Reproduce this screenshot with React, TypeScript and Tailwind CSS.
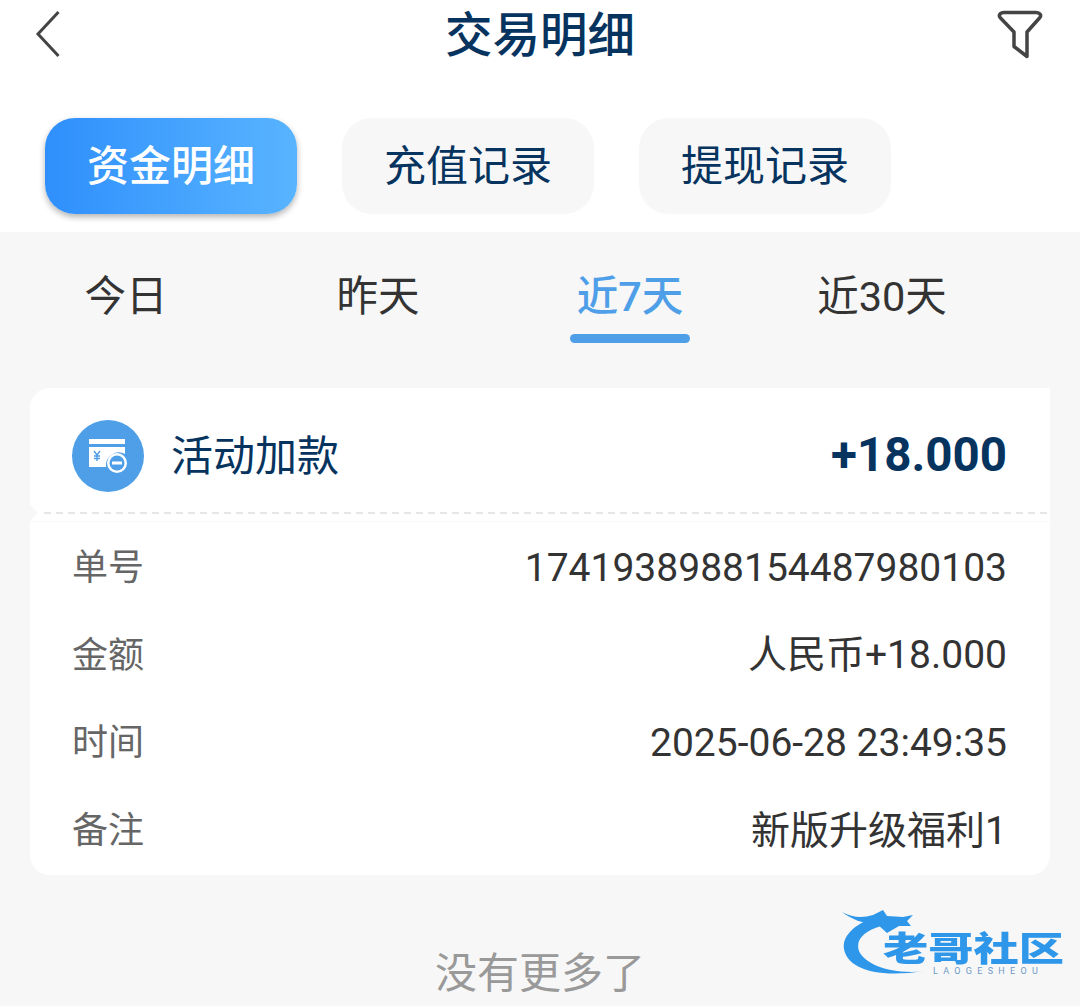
const fontStack = "font-['Roboto','Noto_Sans_CJK_SC',sans-serif]";

const tabs = ["资金明细", "充值记录", "提现记录"];
const ranges = ["今日", "昨天", "近7天", "近30天"];
const rows = [
  { label: "单号", value: "1741938988154487980103" },
  { label: "金额", value: "人民币+18.000" },
  { label: "时间", value: "2025-06-28 23:49:35" },
  { label: "备注", value: "新版升级福利1" },
];

function BackIcon() {
  return (
    <svg className="-mt-[4px]" width="28" height="50" viewBox="0 0 28 50" fill="none" stroke="#444" strokeWidth="3">
      <path d="M23.5 3 L3 25 L23.5 47" />
    </svg>
  );
}

function FilterIcon() {
  return (
    <svg className="-mt-[4px] justify-self-end" width="48" height="52" viewBox="0 0 48 52" fill="none" stroke="#444" strokeWidth="3.5" strokeLinejoin="round">
      <path d="M7 4.5 H39 C43 4.5 45 7.5 42.5 10 L30 24 V48.5 L17 38.5 V24 L3.5 10 C1 7.5 3 4.5 7 4.5 Z" />
    </svg>
  );
}

function CardIcon() {
  return (
    <div className="flex h-[72px] w-[72px] shrink-0 items-center justify-center rounded-full bg-[#4f9ee8]">
      <svg width="40" height="38" viewBox="0 0 40 38">
        <path d="M1 2 H37 V7 H1 Z" fill="#fff" />
        <path d="M1 10 H37 V17 A13 13 0 0 0 18 30 H1 Z" fill="#fff" />
        <circle cx="29" cy="26" r="10" fill="#fff" />
        <circle cx="29" cy="26" r="7.5" fill="#4f9ee8" />
        <rect x="24" y="24.5" width="10" height="3" fill="#fff" />
        <path d="M6 14 L9 18 L12 14 M9 18 V24 M6 19 H12 M6 21.5 H12" stroke="#4f9ee8" strokeWidth="1.4" fill="none" />
      </svg>
    </div>
  );
}

function Watermark() {
  return (
    <div className="absolute bottom-[29px] left-[841px] h-[68px] w-[224px]">
      <svg className="absolute left-0 top-0 blur-[0.5px]" width="110" height="68" viewBox="0 0 110 68" fill="none">
        <path d="M32 9 C12 16 1 28 3 40 C6 58 32 70 84 62 C52 66 24 56 18 42 C14 30 24 22 40 17 Z" fill="#2f97ea" />
        <path d="M1 3 C12 9 22 9 32 6 L42 1 L46 7 L62 8 L72 6 L66 12 L70 17 L58 17 L46 24 L36 15 C22 15 10 10 1 3 Z" fill="#2f97ea" />
      </svg>
      <span className="absolute left-[42px] top-[21px] origin-left scale-x-[1.33] whitespace-nowrap font-['Noto_Sans_CJK_SC',sans-serif] text-[34px] leading-[34px] font-black text-[#2f97ea] blur-[0.5px]">
        老哥社区
      </span>
      <span className="absolute left-[92px] top-[57px] font-['Roboto',sans-serif] text-[9px] leading-[10px] tracking-[5.3px] whitespace-nowrap text-[#6f9ac6]">
        LAOGESHEOU
      </span>
    </div>
  );
}

export default function App() {
  return (
    <div className={`relative h-[1006px] w-[1080px] overflow-hidden bg-[#f7f7f7] ${fontStack}`}>
      <div className="bg-white">
        {/* Header */}
        <div className="grid h-[72px] grid-cols-[1fr_auto_1fr] items-center px-[35px]">
          <BackIcon />
          <h1 className="text-[47.5px] leading-[72px] font-medium text-[#06345f]">交易明细</h1>
          <FilterIcon />
        </div>

        {/* Top tabs */}
        <div className="flex gap-[45px] px-[45px] pt-[46px] pb-[18px]">
          {tabs.map((tab, i) => (
            <div
              key={tab}
              className={
                i === 0
                  ? "flex h-[96px] w-[252px] items-center justify-center rounded-[30px] bg-gradient-to-r from-[#2f8ffc] to-[#58b4ff] text-[42px] font-medium text-white shadow-[0_3px_6px_rgba(0,0,0,0.3)]"
                  : "flex h-[96px] w-[252px] items-center justify-center rounded-[30px] bg-[#f7f7f7] text-[42px] text-[#06345f]"
              }
            >
              {tab}
            </div>
          ))}
        </div>
      </div>

      {/* Date range */}
      <div className="grid h-[156px] w-[1008px] grid-cols-4 pt-[36px] text-[41.5px] leading-[58px] text-[#333]">
        {ranges.map((range, i) => (
          <div key={range} className="flex flex-col items-center">
            <span className={i === 2 ? "whitespace-nowrap font-medium text-[#4f9ee8]" : "whitespace-nowrap"}>{range}</span>
            {i === 2 && <span className="mt-[8px] h-[9px] w-[120px] rounded-full bg-[#4f9ee8]" />}
          </div>
        ))}
      </div>

      {/* Record card */}
      <div className="mx-[30px]">
        <div className="flex h-[122px] items-center rounded-tl-[20px] bg-white pt-[14px] pr-[43px] pl-[42px]">
          <CardIcon />
          <span className="ml-[27px] text-[42px] text-[#06345f]">活动加款</span>
          <span className="ml-auto text-[47.5px] font-bold text-[#06345f]">+18.000</span>
        </div>
        <div className="relative h-[12px] border-b border-[#f9f9f9] bg-white pt-[2px] pr-[3px] pl-[14px]">
          <div className="h-[2px] w-full bg-[repeating-linear-gradient(90deg,#e6e6e6_0_7px,transparent_7px_12px)]" />
          <div className="absolute -left-[9px] top-[-4px] h-[14px] w-[14px] rotate-45 bg-[#f7f7f7]" />
        </div>
        <div className="flex h-[353px] flex-col rounded-b-[20px] bg-white pt-[2px] pr-[43px] pl-[42px]">
          {rows.map((row) => (
            <div key={row.label} className="flex h-[88px] items-center justify-between">
              <span className="text-[36px] text-[#666]">{row.label}</span>
              <span className="text-[39px] text-[#333]">{row.value}</span>
            </div>
          ))}
        </div>
      </div>

      <div className="mt-[69px] text-center text-[42px] leading-[60px] text-[#999]">没有更多了</div>

      <Watermark />
    </div>
  );
}
